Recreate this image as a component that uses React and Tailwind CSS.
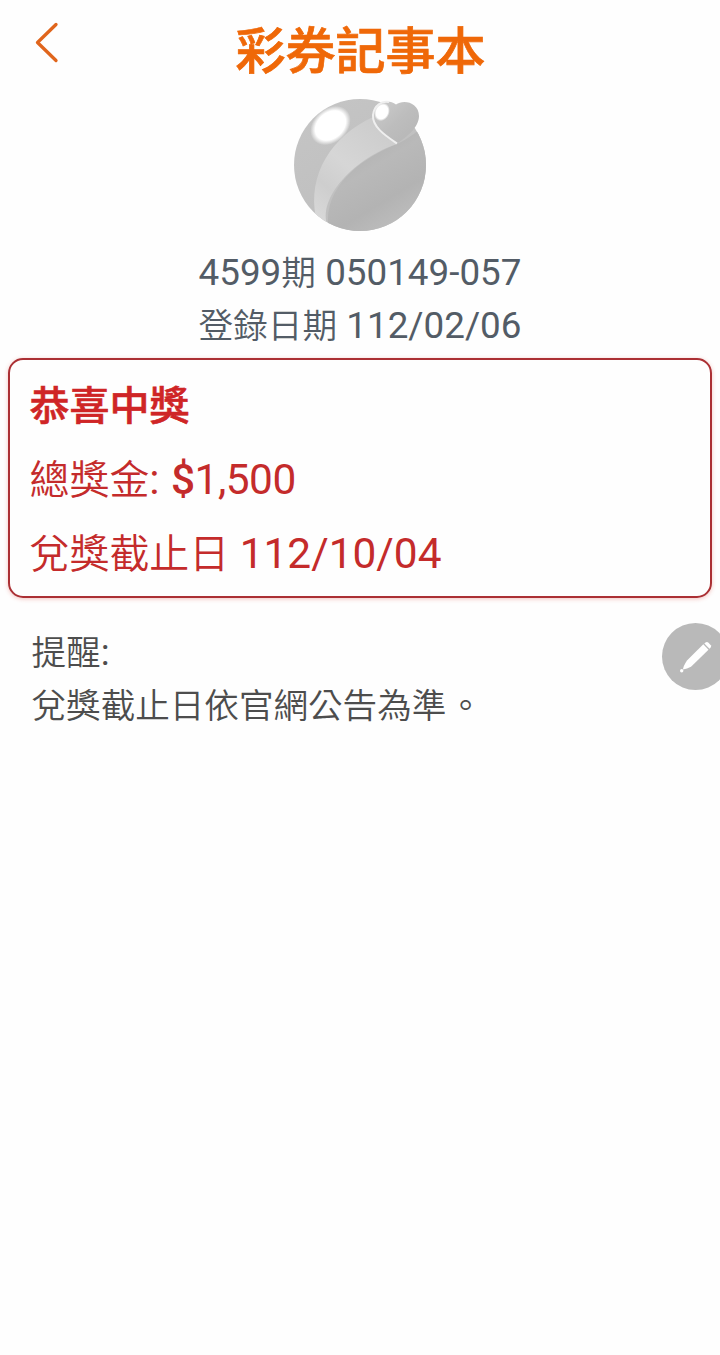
import { useState } from "react";

const ticket = {
  issue: "4599",
  number: "050149-057",
  date: "112/02/06",
  prize: "1,500",
  deadline: "112/10/04",
};

// Chinese glyphs are set a little smaller than the digits next to them
function Zh({ children }) {
  return (
    <span className="font-['Noto_Sans_CJK_TC',sans-serif] text-[0.942em] leading-none font-[350]">
      {children}
    </span>
  );
}

function BallLogo() {
  return (
    <svg width="136" height="136" viewBox="0 0 136 136" aria-hidden="true">
      <defs>
        <linearGradient id="ball" x1="0.2" y1="0.1" x2="0.8" y2="1">
          <stop offset="0" stopColor="#c4c4c4" />
          <stop offset="1" stopColor="#bdbdbd" />
        </linearGradient>
        <linearGradient id="front" x1="0.2" y1="0.1" x2="0.7" y2="1">
          <stop offset="0" stopColor="#adadad" />
          <stop offset="0.35" stopColor="#b9b9b9" />
          <stop offset="0.65" stopColor="#b3b3b3" />
          <stop offset="1" stopColor="#c1c1c1" />
        </linearGradient>
        <linearGradient id="ribbon" x1="0.8" y1="0" x2="0.2" y2="1">
          <stop offset="0" stopColor="#cbcbcb" />
          <stop offset="0.5" stopColor="#d6d6d6" />
          <stop offset="0.75" stopColor="#cecece" />
          <stop offset="1" stopColor="#d8d8d8" />
        </linearGradient>
        <linearGradient id="heart" x1="0" y1="0" x2="1" y2="1">
          <stop offset="0" stopColor="#cdcdcd" />
          <stop offset="0.5" stopColor="#bdbdbd" />
          <stop offset="1" stopColor="#b5b5b5" />
        </linearGradient>
        <radialGradient id="shine">
          <stop offset="0" stopColor="#fff" />
          <stop offset="0.75" stopColor="#fff" />
          <stop offset="1" stopColor="#fff" stopOpacity="0" />
        </radialGradient>
        <clipPath id="round">
          <circle cx="68" cy="67" r="66" />
        </clipPath>
      </defs>
      <circle cx="68" cy="67" r="66" fill="url(#ball)" />
      <g clipPath="url(#round)">
        <path
          d="M136 26 C128 31 115 42 105 46 C75 58 34 84 36 125 L42 140 H140 Z"
          fill="url(#front)"
        />
        <path
          d="M81 19 C40 38 15 76 24 120 L36 129 C24 99 65 59 105 46 C94 38 85 29 81 19 Z"
          fill="url(#ribbon)"
        />
      </g>
      <ellipse cx="38.500" cy="27.500" rx="22.500" ry="17" transform="rotate(-42 38.5 27.5)" fill="url(#shine)" />
      <path
        d="M105 45.500 C94 38 81 29 81 17 C82 4 96 0 104 6.500 C111 1 127 4 127 18 C127 29 115 39 105 45.500 Z"
        fill="url(#heart)"
      />
      <path
        d="M105 45.500 C94 38 80 29 81 17 C82 7 90 2.500 97 4"
        fill="none"
        stroke="#efefef"
        strokeWidth="2"
      />
      <ellipse cx="90" cy="14" rx="7.500" ry="9.500" transform="rotate(25 90 14)" fill="url(#shine)" />
    </svg>
  );
}

function PencilIcon() {
  return (
    <svg width="34" height="34" viewBox="0 0 34 34" fill="#fff" aria-hidden="true">
      <path d="M24.300 4.300 L29.500 9.800 L12 26.700 Q8 29 4 29.500 Q4.300 26 8 20.500 Z" />
      <path d="M26.500 2.500 Q28 1.300 29.500 2.700 L31.800 5.300 Q32.600 6.500 31.500 7.700 L30.500 8.700 L25.300 3.500 Z" />
      <circle cx="2.700" cy="30.800" r="1.700" />
    </svg>
  );
}

export default function App() {
  const [editing, setEditing] = useState(false);

  return (
    <main className="relative min-h-[1355px] w-full overflow-hidden bg-[#fefefe] font-[Roboto,'Noto_Sans_CJK_TC',sans-serif]">
      <header className="grid h-[98px] grid-cols-[100px_1fr_100px]">
        <button type="button" aria-label="返回" className="flex items-start pt-[22px] pl-[35px]">
          <svg width="24" height="42" viewBox="0 0 24 42" fill="none" stroke="#e0651c" strokeWidth="3.300" strokeLinecap="round" strokeLinejoin="round">
            <path d="M21 2.500 L2.500 20.500 L21 38.500" />
          </svg>
        </button>
        <h1 className="pt-[10px] pl-px text-center font-['Noto_Sans_CJK_TC',sans-serif] text-[50px] leading-[74px] font-medium text-[#ef6808] [-webkit-text-stroke:0.7px_#ef6808]">
          彩券記事本
        </h1>
      </header>

      <div className="flex justify-center">
        <BallLogo />
      </div>

      <section className="mt-[13px] text-center text-[36.800px] leading-[52.500px] text-[#535c66]">
        <p>
          {ticket.issue}
          <Zh>期</Zh> {ticket.number}
        </p>
        <p>
          <Zh>登錄日期</Zh> {ticket.date}
        </p>
      </section>

      <section className="mx-2 mt-[6px] h-[240px] rounded-[15px] border-2 border-[#ab3034] pt-[9px] pl-[19.500px] text-[42.400px] leading-[74px] text-[#c42b2b] shadow-[0_1px_4px_rgba(220,60,50,0.3)]">
        <h2 className="pb-[6px] font-['Noto_Sans_CJK_TC',sans-serif] text-[40px] leading-[68px] font-medium text-[#cf2526] [-webkit-text-stroke:0.6px_#cf2526]">
          恭喜中獎
        </h2>
        <p>
          <Zh>總獎金</Zh>: <span className="ml-px inline-block w-[23.500px] font-medium">$</span>
          <span className="tracking-[-0.5px]">{ticket.prize}</span>
        </p>
        <p>
          <Zh>兌獎截止日</Zh> {ticket.deadline}
        </p>
      </section>

      <section className="mt-[28px] pl-[31.500px] text-[36.700px] leading-[53px] text-[#4d4d4d]">
        <p>
          <Zh>提醒</Zh>:
        </p>
        <p>
          <Zh>
            兌獎截止日依官網公告為準<span className="pl-[2px]">。</span>
          </Zh>
        </p>
      </section>

      {/* floating edit button, half tucked behind the screen edge */}
      <button
        type="button"
        aria-label="編輯"
        aria-pressed={editing}
        onClick={() => setEditing(!editing)}
        className="absolute top-[623px] -right-[9px] flex size-[67px] items-center justify-center rounded-full bg-[#b9b9b9]"
      >
        <PencilIcon />
      </button>
    </main>
  );
}
